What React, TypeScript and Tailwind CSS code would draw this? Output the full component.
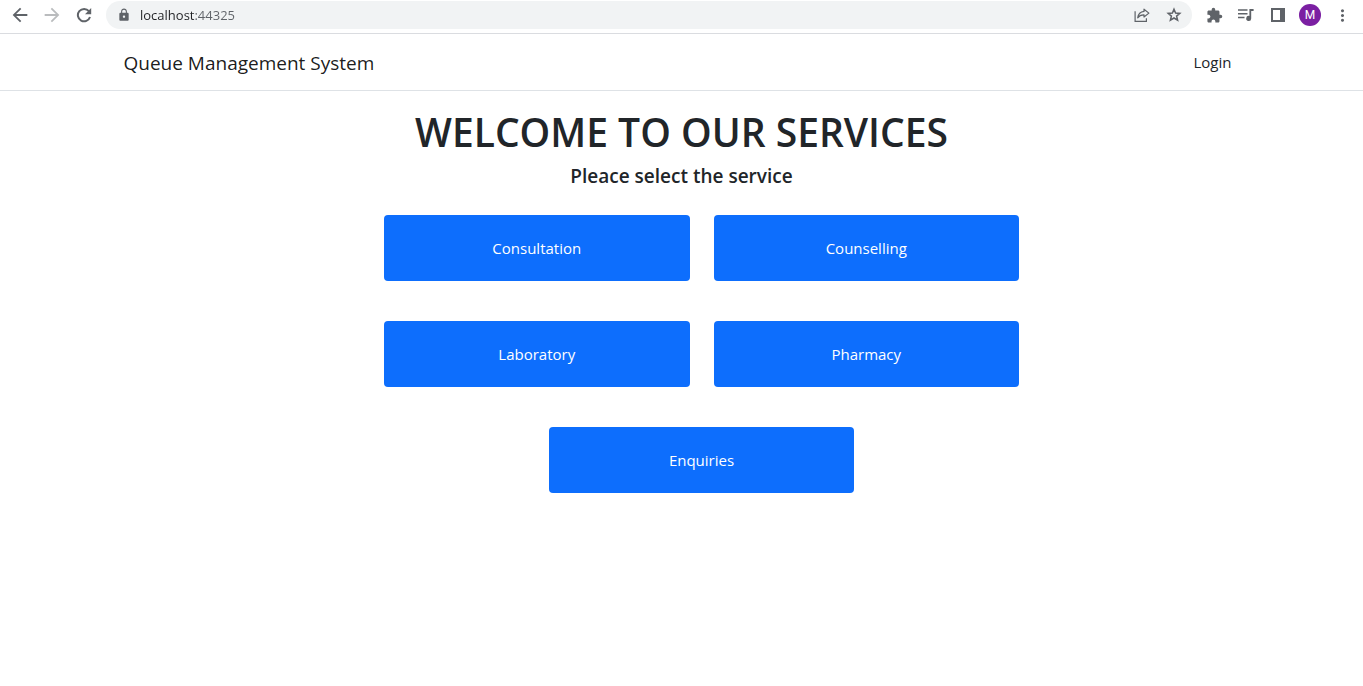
import type { ReactNode } from "react";
import {
  MdArrowBack,
  MdArrowForward,
  MdExtension,
  MdLock,
  MdMoreVert,
} from "react-icons/md";

const services = ["Consultation", "Counselling", "Laboratory", "Pharmacy", "Enquiries"];

function ToolButton({ label, children }: { label: string; children: ReactNode }) {
  return (
    <button
      type="button"
      aria-label={label}
      className="flex size-8 shrink-0 items-center justify-center text-[#5f6368]"
    >
      {children}
    </button>
  );
}

function ReloadIcon() {
  return (
    <svg width="16" height="16" viewBox="0 0 16 16">
      <path d="M12.900 4.200A6.200 6.200 0 1 0 14 10" fill="none" stroke="currentColor" strokeWidth="2" />
      <path d="M15.200 1v6.200H9Z" fill="currentColor" />
    </svg>
  );
}

function StarIcon() {
  return (
    <svg width="16" height="16" viewBox="0 0 16 16" fill="none" stroke="currentColor" strokeWidth="1.5">
      <path d="M8 2.200 9.600 6 13.800 6.400 10.600 9.100 11.600 13.200 8 11 4.400 13.200 5.400 9.100 2.200 6.400 6.400 6Z" />
    </svg>
  );
}

function ShareIcon() {
  return (
    <svg width="16" height="16" viewBox="0 0 16 16" fill="none" stroke="currentColor" strokeWidth="1.2">
      <path d="M1.100 4.200v10.200h11.300v-3.200" />
      <path
        d="M10 2.200 14.900 6.100 10 10V7.800C7.200 7.700 5.200 8.600 3.700 10.800 4.200 7.300 6.200 4.800 10 4.400Z"
        strokeLinejoin="round"
      />
    </svg>
  );
}

function MediaIcon() {
  return (
    <svg width="16" height="14" viewBox="0 0 16 14" fill="currentColor">
      <path d="M0 1.200h9.500v1.600H0zM0 5h9.500v1.600H0zM0 8.700h6.500v1.600H0z" />
      <path d="M11.400 1H15.600V2.900H13.200V10.400A2.500 2.500 0 1 1 11.400 8Z" />
    </svg>
  );
}

function SidePanelIcon() {
  return (
    <svg width="14" height="14" viewBox="0 0 14 14" fill="currentColor" fillRule="evenodd">
      <path d="M0 0h14v14H0zM2 2v10h7V2z" />
    </svg>
  );
}

function BrowserBar() {
  return (
    <div className="flex h-[34px] items-start border-b border-[#dadce0] bg-white pl-1 pr-[5px]">
      <div className="flex h-[30px] shrink-0 items-center">
        <ToolButton label="Back">
          <MdArrowBack size={22} />
        </ToolButton>
        <button
          type="button"
          aria-label="Forward"
          className="flex size-8 items-center justify-center text-[#babcbe]"
        >
          <MdArrowForward size={22} />
        </button>
        <ToolButton label="Reload">
          <ReloadIcon />
        </ToolButton>
      </div>
      <div className="ml-1.5 mt-px flex h-7 min-w-0 flex-1 items-center rounded-full bg-[#f1f3f4] pl-[11px] pr-0.5">
        <MdLock size={14} className="shrink-0 text-[#5f6368]" />
        <input
          aria-label="Address"
          defaultValue="localhost:44325"
          className="ml-[9px] min-w-0 flex-1 bg-[linear-gradient(to_right,#202124_55px,#5f6368_55px)] bg-clip-text font-['Open_Sans',sans-serif] text-[13px] leading-5 text-transparent caret-black outline-none"
        />
        <ToolButton label="Share">
          <ShareIcon />
        </ToolButton>
        <ToolButton label="Bookmark">
          <StarIcon />
        </ToolButton>
      </div>
      <div className="ml-1.5 flex h-[30px] shrink-0 items-center">
        <ToolButton label="Extensions">
          <MdExtension size={17} />
        </ToolButton>
        <ToolButton label="Media controls">
          <MediaIcon />
        </ToolButton>
        <ToolButton label="Side panel">
          <SidePanelIcon />
        </ToolButton>
        <ToolButton label="Profile">
          <span className="flex size-[22px] items-center justify-center rounded-full bg-[#7b1fa2] font-[Roboto,sans-serif] text-[12px] text-white">
            M
          </span>
        </ToolButton>
        <ToolButton label="Menu">
          <MdMoreVert size={19} />
        </ToolButton>
      </div>
    </div>
  );
}

export default function App() {
  return (
    <div className="min-h-screen bg-white font-['Open_Sans','Noto_Sans',sans-serif] text-[#212529]">
      <BrowserBar />
      <header className="border-b border-[#dee2e6]">
        <nav className="mx-auto flex h-14 max-w-[1140px] items-center justify-between px-3">
          <a href="#home" className="pt-0.5 text-[19px] leading-7 text-black/90">
            Queue Management System
          </a>
          <a href="#login" className="px-2 text-[15px] leading-6 text-[#212529]">
            Login
          </a>
        </nav>
      </header>
      <main className="pt-[17px]">
        <h1 className="text-center text-[39px] font-semibold leading-[48px]">WELCOME TO OUR SERVICES</h1>
        <h2 className="mt-2 text-center text-[19px] font-semibold leading-6">Pleace select the service</h2>
        <div className="mx-auto mt-[27px] max-w-[675px] pl-10">
          <div className="grid grid-cols-4 gap-x-6 gap-y-10">
            {services.map((name) => (
              <button
                key={name}
                type="button"
                className="col-span-2 h-[66px] rounded bg-[#0d6efd] text-[15px] leading-6 text-white last:col-start-2"
              >
                {name}
              </button>
            ))}
          </div>
        </div>
      </main>
    </div>
  );
}
